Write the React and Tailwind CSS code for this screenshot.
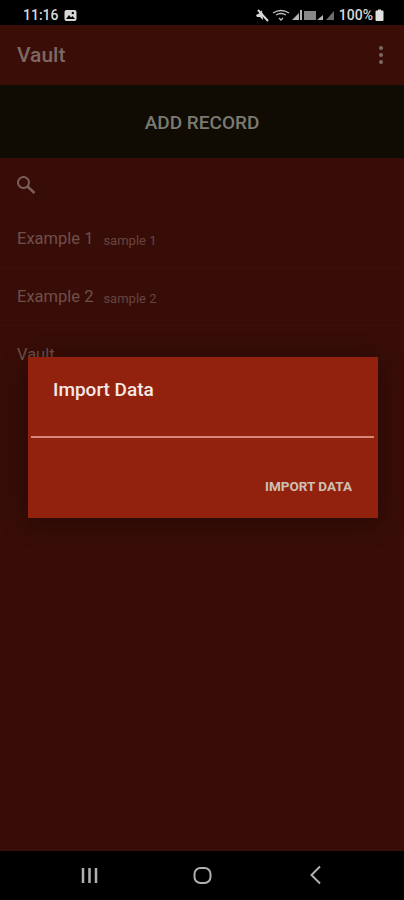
// Vault app with the Import Data dialog open

const RECORDS = [
  { name: 'Example 1', note: 'sample 1' },
  { name: 'Example 2', note: 'sample 2' },
]

function StatusBar() {
  return (
    <div className="h-[25px] shrink-0 bg-black flex items-center justify-between pt-[5px] pl-[23px] pr-[20px] text-[#d8d8d8] text-[14px] font-medium">
      <div className="flex items-center gap-[5px]">
        <span>11:16</span>
        <svg width="13" height="13" viewBox="0 0 13 13">
          <rect x="0.5" y="1" width="12" height="11" rx="2" fill="#d8d8d8" />
          <circle cx="8.8" cy="4" r="1.2" fill="#000" />
          <path d="M2 10 L5 6 L7 8.5 L8.5 7 L11 10 Z" fill="#000" />
        </svg>
      </div>
      <div className="flex items-center">
        <svg width="14" height="13" viewBox="0 0 14 13" className="mr-[3px]">
          <path d="M1 6 L5 4 L7 1 L8 11 L5 8 L2 8 Z" fill="#d8d8d8" />
          <path d="M3 1 L13 12" stroke="#d8d8d8" strokeWidth="2" />
        </svg>
        <svg width="18" height="13" viewBox="0 0 18 13" className="mr-[2px]" fill="none" stroke="#bdbdbd" strokeWidth="1.3">
          <path d="M1 4 Q9 -1 17 4" />
          <path d="M4 6 Q9 3 14 6" />
          <path d="M7 9 L9 11 L11 9" />
        </svg>
        <svg width="45" height="12" viewBox="0 0 45 12" className="mr-[2px]" fill="#b5b5b5">
          <path d="M0 11 L7 11 L7 4 Z" />
          <rect x="8" y="1" width="2" height="10" />
          <rect x="12" y="2" width="12" height="9" opacity="0.75" />
          <path d="M25 11 L31 11 L31 6 Z" />
          <path d="M34 11 L42 11 L42 2 Z" opacity="0.6" />
        </svg>
        <span className="text-[14px]">100%</span>
        <svg width="9" height="12" viewBox="0 0 8 12" className="ml-[2px]">
          <path d="M2.5 0.5 H5.5 V1.5 H7 A1 1 0 0 1 8 2.5 V11 A1 1 0 0 1 7 12 H1 A1 1 0 0 1 0 11 V2.5 A1 1 0 0 1 1 1.5 H2.5 Z" fill="#e0e0e0" />
        </svg>
      </div>
    </div>
  )
}

export default function App() {
  return (
    <div className="w-[404px] h-[900px] flex flex-col bg-[#380d07] overflow-hidden font-['Roboto',sans-serif]">
      <StatusBar />

      <div className="h-[60px] shrink-0 flex items-center justify-between pt-[2px] pl-[17px] pr-[21px] bg-[#3a0e07]">
        <span className="text-[21px] font-medium text-[#7d6864]">Vault</span>
        <div className="flex flex-col gap-[3px] -mt-[2px]">
          <span className="w-[4px] h-[4px] rounded-full bg-[#7d6864]" />
          <span className="w-[4px] h-[4px] rounded-full bg-[#7d6864]" />
          <span className="w-[4px] h-[4px] rounded-full bg-[#7d6864]" />
        </div>
      </div>

      <div className="h-[73px] shrink-0 flex items-center justify-center pt-[3px] bg-[#110c03] text-[19px] font-medium text-[#7b7a72]">
        ADD RECORD
      </div>

      <div className="relative flex-1">
        <div className="h-[52px] flex items-center pl-[16px]">
          <svg width="20" height="20" viewBox="0 0 20 20" fill="none" stroke="#7a5f5a" strokeWidth="2" className="mt-[1px]">
            <circle cx="7.500" cy="7.500" r="5.500" />
            <path d="M11.500 11.500 L18.500 18" strokeWidth="2.500" />
          </svg>
        </div>

        {RECORDS.map(r => (
          <div key={r.name} className="h-[58px] flex items-center gap-[10px] pl-[17px] pt-[2px] border-b border-[#400f08]">
            <span className="text-[16.500px] text-[#6f4f4a]">{r.name}</span>
            <span className="text-[13px] text-[#664440] mt-[2px]">{r.note}</span>
          </div>
        ))}

        <div className="h-[58px] flex items-center pl-[17px]">
          <span className="text-[16.500px] text-[#6f4f4a]">Vault</span>
        </div>

        <div className="absolute left-[28px] top-[199px] w-[350px] h-[161px] flex flex-col bg-[#92220d] shadow-[0_4px_24px_rgba(0,0,0,0.35)]">
          <div className="h-[66px] flex items-center pl-[25px] text-[19px] font-medium text-[#f5e9e6]">
            Import Data
          </div>
          <div className="h-[2px] ml-[3px] mr-[4px] mt-[13px] bg-[#d9877a]" />
          <div className="flex-1 flex justify-end items-center pr-[26px] pt-[17px] text-[13.500px] font-bold text-[#cfc0b4]">
            IMPORT DATA
          </div>
        </div>
      </div>

      <div className="h-[49px] shrink-0 bg-black flex items-center">
        <svg width="404" height="49" viewBox="0 0 404 49" fill="none" stroke="#b0b0b0" strokeWidth="2.500">
          <path d="M83 17 V32 M89.500 17 V32 M96 17 V32" />
          <rect x="194.500" y="17" width="16" height="15" rx="6" strokeWidth="2" />
          <path d="M320 15.500 L311.500 24 L320 32.500" strokeWidth="2" />
        </svg>
      </div>
    </div>
  )
}
